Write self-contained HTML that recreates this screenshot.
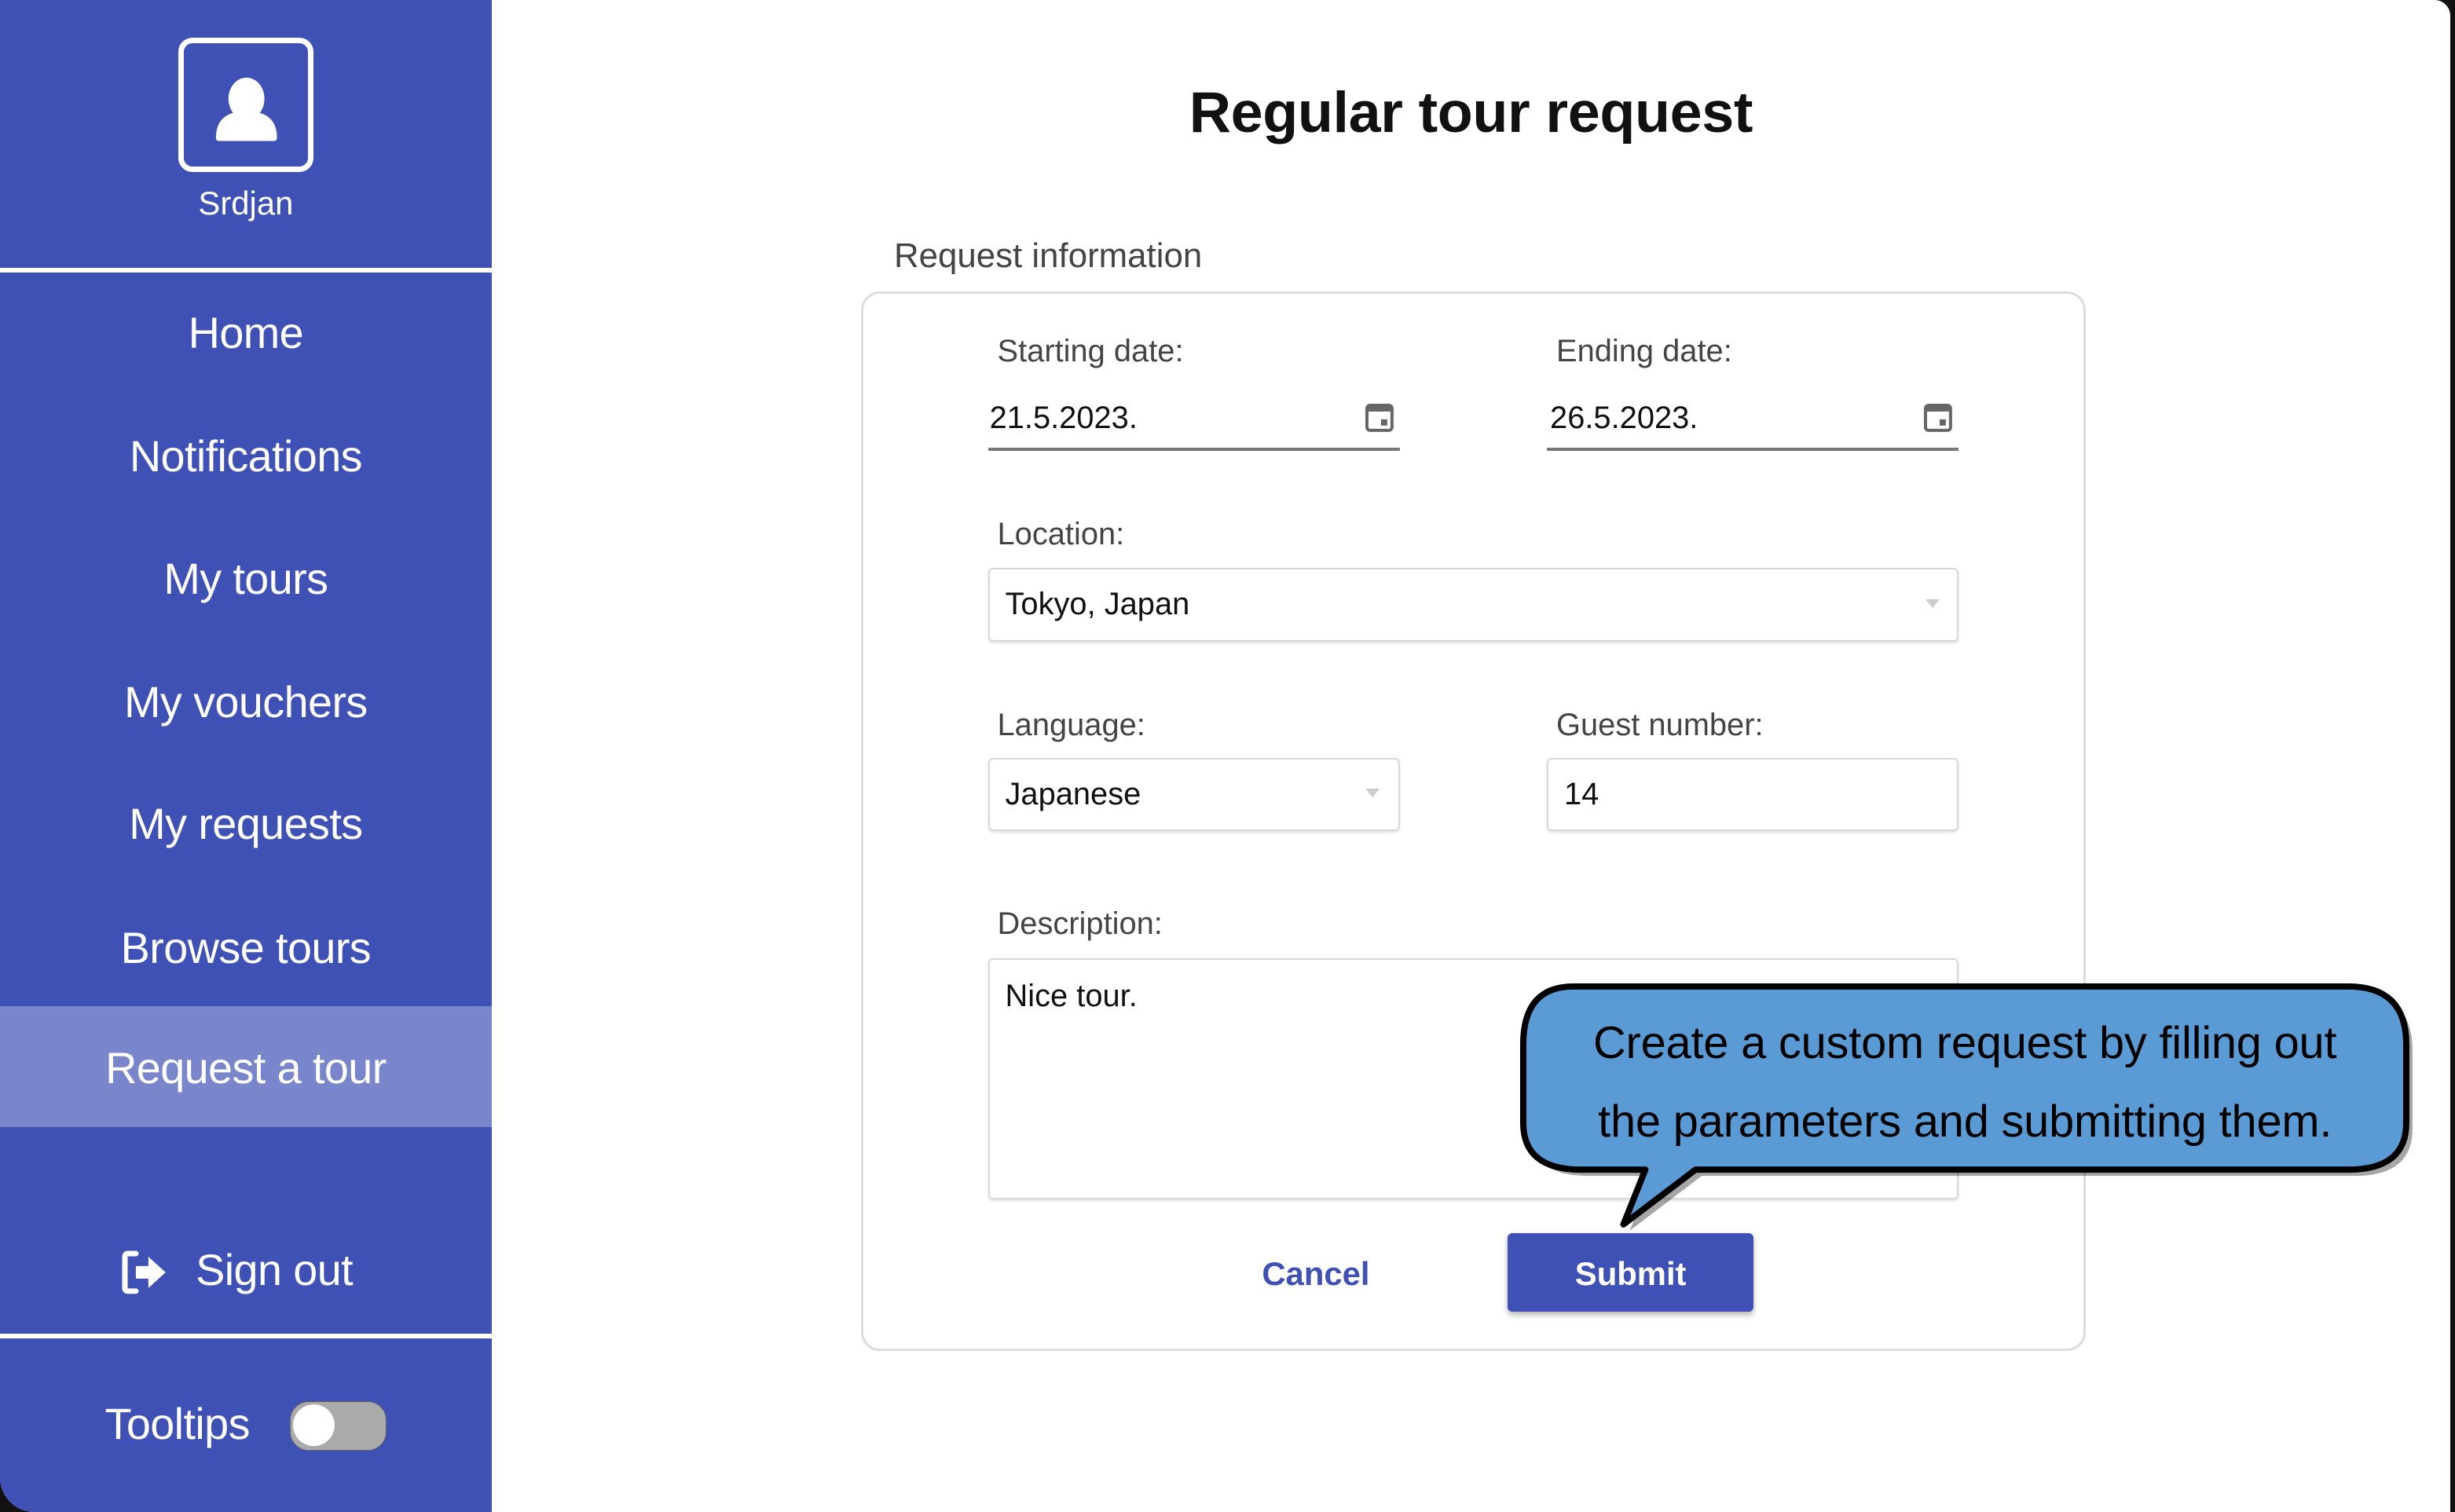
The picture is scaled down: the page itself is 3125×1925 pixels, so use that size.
<!DOCTYPE html>
<html><head><meta charset="utf-8"><style>
html,body{margin:0;padding:0;background:#000;}
body{width:3125px;height:1925px;overflow:hidden;}
#z{zoom:1.99298;width:1568px;height:966px;position:relative;background:#111;font-family:"Liberation Sans",sans-serif;}
.win{position:absolute;left:0;top:0;width:1565px;height:966px;background:#fff;border-radius:0 10px 0 22px;overflow:hidden;}
.side{position:absolute;left:0;top:0;width:314px;height:966px;background:#3f51b5;color:#fff;}
.ab{position:absolute;text-align:center;left:0;width:314px;}
.nav{font-size:28px;letter-spacing:-0.3px;}
.sep{position:absolute;left:0;width:314px;height:3px;background:#fff;}
.lbl{position:absolute;font-size:20px;color:#444;}
.val{position:absolute;font-size:20px;color:#111;}
.box{position:absolute;border:1.5px solid #d8d8d8;border-radius:3px;background:#fff;box-shadow:0 1px 2px rgba(0,0,0,.12);}
.uline{position:absolute;height:2px;background:#777;}
</style></head><body><div id="z">
<div class="win">
<div class="side">
  <div style="position:absolute;left:114px;top:24px;border:4px solid #fff;border-radius:9px;box-sizing:content-box;width:79px;height:79px;"></div>
  <svg style="position:absolute;left:114px;top:24px" width="88" height="88" viewBox="0 0 88 88"><ellipse cx="43.5" cy="39" rx="11.5" ry="13.5" fill="#fff"/><path d="M24 64 Q24 47 43.5 47 Q63 47 63 64 Q63 66 61 66 L26 66 Q24 66 24 64Z" fill="#fff"/></svg>
  <div class="ab" style="top:118px;font-size:21px;">Srdjan</div>
  <div class="sep" style="top:171px"></div>
  <div class="ab nav" style="top:196px">Home</div>
  <div class="ab nav" style="top:275px">Notifications</div>
  <div class="ab nav" style="top:353px">My tours</div>
  <div class="ab nav" style="top:432px">My vouchers</div>
  <div class="ab nav" style="top:510px">My requests</div>
  <div class="ab nav" style="top:589px">Browse tours</div>
  <div style="position:absolute;left:0;top:643px;width:314px;height:77px;background:#7a86cc;"></div>
  <div class="ab nav" style="top:666px">Request a tour</div>
  <svg style="position:absolute;left:78px;top:798px" width="32" height="30" viewBox="0 0 32 30"><path d="M9 3 L4 3 Q2 3 2 5 L2 25 Q2 27 4 27 L9 27" stroke="#fff" stroke-width="3.5" fill="none" stroke-linecap="round"/><path d="M9 11 L17 11 L17 5 L28 15 L17 25 L17 19 L9 19Z" fill="#fff"/></svg>
  <div class="nav" style="position:absolute;left:125px;top:795px;">Sign out</div>
  <div class="sep" style="top:852px"></div>
  <div class="nav" style="position:absolute;left:67px;top:893px;">Tooltips</div>
  <div style="position:absolute;left:185px;top:895px;width:61px;height:31px;border:1px dotted #222;border-radius:12px;background:#aaa;"></div>
  <div style="position:absolute;left:187px;top:897px;width:27px;height:27px;border-radius:50%;background:#fff;"></div>
</div>
<div style="position:absolute;left:314px;width:1251px;top:50px;text-align:center;font-size:37px;font-weight:bold;color:#111;letter-spacing:-0.2px;">Regular tour request</div>
<div style="position:absolute;left:571px;top:151px;font-size:22px;color:#444;">Request information</div>
<div style="position:absolute;left:550px;top:186px;width:779px;height:674px;border:2px solid #ddd;border-radius:12px;"></div>
<div class="lbl" style="left:637px;top:213px">Starting date:</div>
<div class="lbl" style="left:994px;top:213px">Ending date:</div>
<div class="val" style="left:632px;top:256px">21.5.2023.</div>
<div class="val" style="left:990px;top:256px">26.5.2023.</div>
<svg style="position:absolute;left:871px;top:255px" width="20" height="22" viewBox="0 0 20 22"><rect x="2" y="4" width="16" height="16" rx="2" fill="none" stroke="#666" stroke-width="2"/><rect x="2" y="4" width="16" height="4" fill="#666"/><rect x="11" y="13" width="4" height="4" fill="#666"/></svg>
<svg style="position:absolute;left:1228px;top:255px" width="20" height="22" viewBox="0 0 20 22"><rect x="2" y="4" width="16" height="16" rx="2" fill="none" stroke="#666" stroke-width="2"/><rect x="2" y="4" width="16" height="4" fill="#666"/><rect x="11" y="13" width="4" height="4" fill="#666"/></svg>
<div class="uline" style="left:631px;top:286px;width:263px"></div>
<div class="uline" style="left:988px;top:286px;width:263px"></div>
<div class="lbl" style="left:637px;top:330px">Location:</div>
<div class="box" style="left:631px;top:363px;width:618px;height:45px"></div>
<div class="val" style="left:642px;top:375px">Tokyo, Japan</div>
<div style="position:absolute;left:1230px;top:383px;border-left:5px solid transparent;border-right:5px solid transparent;border-top:6px solid #ccc;"></div>
<div class="lbl" style="left:637px;top:452px">Language:</div>
<div class="lbl" style="left:994px;top:452px">Guest number:</div>
<div class="box" style="left:631px;top:484px;width:261px;height:45px"></div>
<div class="val" style="left:642px;top:496px">Japanese</div>
<div style="position:absolute;left:872px;top:504px;border-left:5px solid transparent;border-right:5px solid transparent;border-top:6px solid #ccc;"></div>
<div class="box" style="left:988px;top:484px;width:261px;height:45px"></div>
<div class="val" style="left:999px;top:496px">14</div>
<div class="lbl" style="left:637px;top:579px">Description:</div>
<div class="box" style="left:631px;top:612px;width:618px;height:152px"></div>
<div class="val" style="left:642px;top:625px">Nice tour.</div>
<div style="position:absolute;left:806px;top:802px;font-size:21px;font-weight:bold;color:#3f51b5;">Cancel</div>
<div style="position:absolute;left:963px;top:788px;width:157px;height:50px;background:#3f51b5;border-radius:3px;box-shadow:0 2px 4px rgba(0,0,0,.3);color:#fff;font-size:21px;font-weight:bold;text-align:center;line-height:52px;">Submit</div>
<svg style="position:absolute;left:965px;top:622px" width="590" height="170" viewBox="0 0 590 170">
<path d="M40 8 L535 8 Q572 8 572 45 L572 95 Q572 125 535 125 L118 125 L72 160 L86 125 L45 125 Q8 125 8 95 L8 45 Q8 8 40 8Z" fill="rgba(0,0,0,.35)" transform="translate(4,4)"/>
<path d="M40 8 L535 8 Q572 8 572 45 L572 95 Q572 125 535 125 L118 125 L72 160 L86 125 L45 125 Q8 125 8 95 L8 45 Q8 8 40 8Z" fill="#5b9bd5" stroke="#000" stroke-width="4" stroke-linejoin="round"/>
</svg>
<div style="position:absolute;left:965px;top:642px;width:580px;text-align:center;font-size:29px;line-height:50px;color:#000;letter-spacing:-0.1px;white-space:nowrap;">Create a custom request by filling out<br>the parameters and submitting them.</div>
</div>
</div></body></html>
